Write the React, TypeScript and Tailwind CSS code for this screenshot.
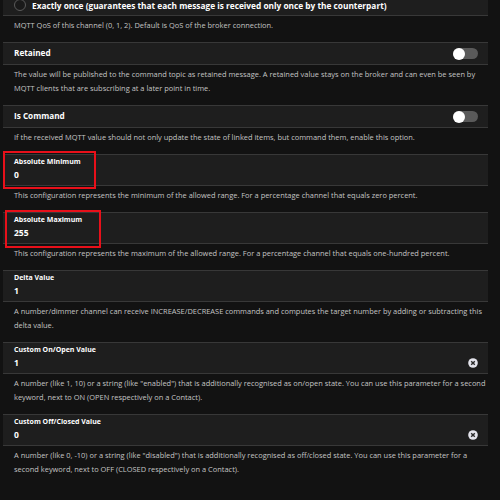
import React from "react";

const font = { fontFamily: '"Open Sans", "Noto Sans", Arial, sans-serif' };

function Toggle() {
  return (
    <div className="relative w-[25px] h-[11px] rounded-full bg-[#5a5a5a] flex items-center">
      <div className="absolute left-0 w-[12px] h-[12px] rounded-full bg-white" />
    </div>
  );
}

function ClearIcon() {
  return (
    <svg width="10" height="10" viewBox="0 0 10 10">
      <circle cx="5" cy="5" r="4.8" fill="#e4e4ec" />
      <path d="M3.2 3.2 L6.8 6.8 M6.8 3.2 L3.2 6.8" stroke="#2a2a2a" strokeWidth="1.4" />
    </svg>
  );
}

function Desc({ lines }: { lines: string[] }) {
  return (
    <div className="pl-[14px] pt-[2px] pb-[10px] text-[7.45px] leading-[14px] text-[#c4c4c4] whitespace-nowrap">
      {lines.map((l, i) => (
        <div key={i}>{l}</div>
      ))}
    </div>
  );
}

function SwitchPanel({ label }: { label: string }) {
  return (
    <div className="mx-[3px] w-[485px] h-[23px] bg-[#1e1e1e] border-y border-[#383838] flex items-center justify-between pl-[11px] pr-[10px]">
      <span className="text-[8.2px] font-bold text-white">{label}</span>
      <Toggle />
    </div>
  );
}

function InputPanel({
  label,
  value,
  clear,
  box,
}: {
  label: string;
  value: string;
  clear?: boolean;
  box?: string;
}) {
  return (
    <div className="relative mx-[3px] w-[485px] h-[32px] bg-[#1e1e1e] border-y border-[#383838] flex items-end pl-[11px] pr-[10px]">
      <div className="flex flex-col flex-1 pb-[3px]">
        <span className="text-[7px] font-bold text-white leading-[12px]">{label}</span>
        <span className="text-[8.5px] font-bold text-white leading-[14px]">{value}</span>
      </div>
      {clear && (
        <div className="pb-[5px]">
          <ClearIcon />
        </div>
      )}
      {box && <div className={box} />}
    </div>
  );
}

export default function App() {
  return (
    <div className="w-[500px] h-[500px] overflow-hidden bg-[#121212]" style={font}>
      <div className="-mt-[5px] mx-[3px] w-[485px] h-[21px] bg-[#1e1e1e] border-b border-[#383838] flex items-center pl-[11px]">
        <div className="w-[12px] h-[12px] rounded-full border border-[#5a5a5a] bg-[#1a1a1a] mr-[6px] shrink-0" />
        <span className="text-[8.3px] leading-[11px] font-bold text-white whitespace-nowrap">
          Exactly once (guarantees that each message is received only once by the counterpart)
        </span>
      </div>
      <Desc lines={["MQTT QoS of this channel (0, 1, 2). Default is QoS of the broker connection."]} />
      <SwitchPanel label="Retained" />
      <Desc
        lines={[
          "The value will be published to the command topic as retained message. A retained value stays on the broker and can even be seen by",
          "MQTT clients that are subscribing at a later point in time.",
        ]}
      />
      <SwitchPanel label="Is Command" />
      <Desc
        lines={[
          "If the received MQTT value should not only update the state of linked items, but command them, enable this option.",
        ]}
      />
      <InputPanel
        label="Absolute Minimum"
        value="0"
        box="absolute left-0 top-[-4px] w-[93px] h-[38px] border-2 border-[#e8101a]"
      />
      <Desc
        lines={[
          "This configuration represents the minimum of the allowed range. For a percentage channel that equals zero percent.",
        ]}
      />
      <InputPanel
        label="Absolute Maximum"
        value="255"
        box="absolute left-[2px] top-[-3px] w-[96px] h-[38px] border-2 border-[#e8101a]"
      />
      <Desc
        lines={[
          "This configuration represents the maximum of the allowed range. For a percentage channel that equals one-hundred percent.",
        ]}
      />
      <InputPanel label="Delta Value" value="1" />
      <Desc
        lines={[
          "A number/dimmer channel can receive INCREASE/DECREASE commands and computes the target number by adding or subtracting this",
          "delta value.",
        ]}
      />
      <InputPanel label="Custom On/Open Value" value="1" clear />
      <Desc
        lines={[
          'A number (like 1, 10) or a string (like "enabled") that is additionally recognised as on/open state. You can use this parameter for a second',
          "keyword, next to ON (OPEN respectively on a Contact).",
        ]}
      />
      <InputPanel label="Custom Off/Closed Value" value="0" clear />
      <Desc
        lines={[
          'A number (like 0, -10) or a string (like "disabled") that is additionally recognised as off/closed state. You can use this parameter for a',
          "second keyword, next to OFF (CLOSED respectively on a Contact).",
        ]}
      />
    </div>
  );
}
